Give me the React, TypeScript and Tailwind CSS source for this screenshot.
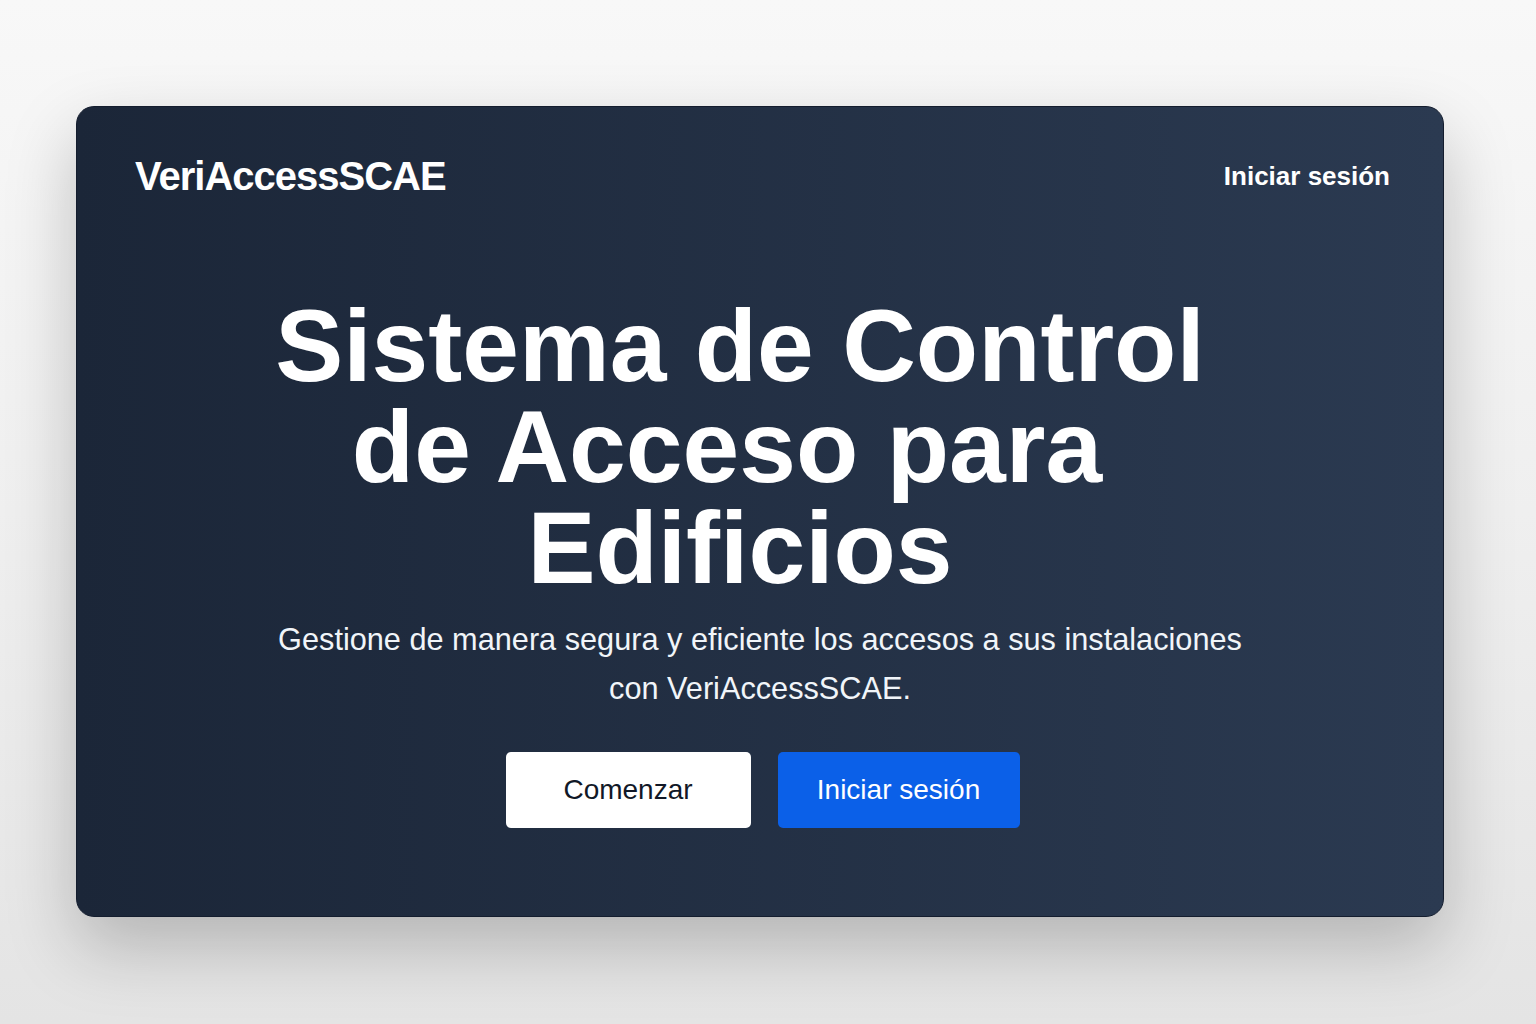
import React from "react";

const FONT = { fontFamily: '"Liberation Sans", Arial, sans-serif' };

function Header() {
  return (
    <header className="flex items-center justify-between pl-[58px] pr-[53px] pt-[49px]">
      <div className="text-[40px] font-bold leading-none tracking-tight text-white">VeriAccessSCAE</div>
      <a href="#" className="text-[26px] font-bold leading-none text-white">Iniciar sesión</a>
    </header>
  );
}

function Hero() {
  return (
    <section className="flex flex-col items-center">
      <h1 className="mt-[100px] pr-[40px] text-center text-[102px] font-bold leading-[101px] text-white">
        Sistema de Control
        <br />
        <span className="mr-[26px]">de Acceso para</span>
        <br />
        Edificios
      </h1>
      <p className="mt-[16px] text-center text-[30.7px] leading-[49px] text-[#f1f5f9]">
        Gestione de manera segura y eficiente los accesos a sus instalaciones
        <br />
        con VeriAccessSCAE.
      </p>
      <div className="ml-[5px] mt-[39px] flex gap-[27px]">
        <button className="h-[76px] w-[245px] rounded-[5px] bg-white text-[28px] text-[#111827]">Comenzar</button>
        <button className="h-[76px] w-[242px] rounded-[5px] bg-[#0b60e8] text-[28px] text-white">Iniciar sesión</button>
      </div>
    </section>
  );
}

export default function App() {
  return (
    <div
      style={FONT}
      className="h-[1024px] w-full overflow-hidden bg-gradient-to-b from-[#f8f8f8] via-[#efefef] to-[#e4e4e4] pl-[76px] pt-[106px]"
    >
      <main className="h-[811px] w-[1368px] rounded-[18px] border border-[#141d2e] bg-gradient-to-r from-[#1b2638] to-[#2b3a51] shadow-[0_30px_70px_rgba(0,0,0,0.22)]">
        <Header />
        <Hero />
      </main>
    </div>
  );
}
